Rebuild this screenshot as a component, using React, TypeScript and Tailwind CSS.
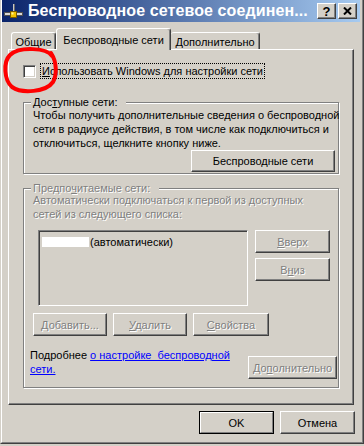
import React from "react";

type BtnProps = {
  className?: string;
  children: React.ReactNode;
  disabled?: boolean;
  isDefault?: boolean;
};

function Btn({ className = "", children, disabled = false, isDefault = false }: BtnProps) {
  const txt = disabled ? "text-[#808080] [text-shadow:1px_1px_0_#ffffff]" : "text-black";
  if (isDefault) {
    return (
      <div className={`border border-black ${className}`}>
        <div
          className={`w-full h-full flex items-center justify-center bg-[#d4d0c8] border border-t-white border-l-white border-r-[#808080] border-b-[#808080] ${txt}`}
        >
          {children}
        </div>
      </div>
    );
  }
  return (
    <div
      className={`flex items-center justify-center bg-[#d4d0c8] border border-t-white border-l-white border-r-[#404040] border-b-[#404040] shadow-[inset_-1px_-1px_0_#808080] ${txt} ${className}`}
    >
      {children}
    </div>
  );
}

function NetIcon() {
  return (
    <svg width="19" height="16" viewBox="0 0 19 16" className="ml-[2px] shrink-0">
      <rect x="9" y="1" width="2" height="10" fill="#6b6b6b" />
      <rect x="9" y="1" width="1" height="10" fill="#c8c8c8" />
      <rect x="0.5" y="9.5" width="18" height="3" fill="#d8d8d8" stroke="#505050" strokeWidth="1" />
      <rect x="6.5" y="8.5" width="6" height="6" fill="#f2c200" stroke="#7a5a00" strokeWidth="1" />
      <rect x="7.5" y="9.5" width="2" height="2" fill="#fff3a0" />
    </svg>
  );
}

function Group({
  label,
  disabled,
  className,
  children,
}: {
  label: React.ReactNode;
  disabled?: boolean;
  className: string;
  children: React.ReactNode;
}) {
  return (
    <div
      className={`relative border border-[#808080] shadow-[inset_1px_1px_0_#ffffff,1px_1px_0_#ffffff] ${className}`}
    >
      <div
        className={`absolute left-[7px] -top-[8px] bg-[#d4d0c8] pl-[2px] pr-[9px] whitespace-nowrap ${
          disabled ? "text-[#808080] [text-shadow:1px_1px_0_#ffffff]" : "text-black"
        }`}
      >
        {label}
      </div>
      {children}
    </div>
  );
}

export default function App() {
  const dis = "text-[#808080] [text-shadow:1px_1px_0_#ffffff]";
  return (
    <div className="relative w-[364px] h-[446px] bg-[#d4d0c8] font-['Liberation_Sans',Arial,sans-serif] text-[11px] leading-[14px] text-black overflow-hidden">
      <div className="h-[444px] border-l border-r border-b border-l-[#d4d0c8] border-r-[#404040] border-b-[#404040]">
        <div className="h-full border-l border-r border-b border-l-white border-r-[#808080] border-b-[#808080] flex flex-col">
          {/* Title bar */}
          <div className="h-[22px] mr-[2px] shrink-0 bg-[linear-gradient(to_right,#0a246a,#a6caf0)] flex items-center">
            <NetIcon />
            <span className="ml-[5px] min-w-0 text-white font-bold text-[16px] leading-[20px] tracking-[0.1px] whitespace-nowrap">
              Беспроводное сетевое соединен...
            </span>
            <div className="ml-auto mr-[3px] flex gap-[2px] shrink-0">
              <div className="w-[19px] h-[16px] flex items-center justify-center bg-[#d4d0c8] border border-t-white border-l-white border-r-[#404040] border-b-[#404040] shadow-[inset_-1px_-1px_0_#808080] font-bold text-[13px] leading-[13px] text-black">
                ?
              </div>
              <div className="w-[19px] h-[16px] flex items-center justify-center bg-[#d4d0c8] border border-t-white border-l-white border-r-[#404040] border-b-[#404040] shadow-[inset_-1px_-1px_0_#808080]">
                <svg width="9" height="8" viewBox="0 0 9 8">
                  <path d="M1 0.5 L8 7.5 M8 0.5 L1 7.5" stroke="#000" strokeWidth="2" />
                </svg>
              </div>
            </div>
          </div>

          {/* Tabs */}
          <div className="mt-[6px] ml-[9px] h-[21px] flex items-end shrink-0">
            <div className="w-[45px] h-[17px] pt-[2px] text-center border-t border-l border-r border-t-white border-l-white border-r-[#404040] rounded-t-[3px] shadow-[inset_-1px_0_0_#808080]">
              Общие
            </div>
            <div className="relative z-10 -mb-px w-[115px] h-[22px] pt-[4px] text-center bg-[#d4d0c8] border-t border-l border-r border-t-white border-l-white border-r-[#404040] rounded-t-[3px] shadow-[inset_-1px_0_0_#808080]">
              Беспроводные сети
            </div>
            <div className="w-[89px] h-[17px] pt-[2px] text-center border-t border-r border-t-white border-r-[#404040] rounded-t-[3px] shadow-[inset_-1px_0_0_#808080]">
              Дополнительно
            </div>
          </div>

          {/* Panel */}
          <div className="ml-[6px] w-[346px] h-[356px] shrink-0 border border-t-white border-l-white border-r-[#404040] border-b-[#404040] shadow-[inset_-1px_-1px_0_#808080] pt-[13px] px-[14px] flex flex-col">
            <div className="h-[16px] flex items-center">
              <div className="w-[13px] h-[13px] bg-white border border-t-[#808080] border-l-[#808080] border-r-white border-b-white shadow-[inset_1px_1px_0_#404040,inset_-1px_-1px_0_#d4d0c8]" />
              <div className="ml-[4px] h-[16px] border border-dotted border-black pl-[1px] pr-[1px] leading-[14px] whitespace-nowrap">
                <u>И</u>спользовать Windows для настройки сети
              </div>
            </div>

            <Group
              className="mt-[23px] h-[72px] pt-[5px] pl-[9px] pr-[3px] flex flex-col"
              label={
                <span>
                  Дос<u>т</u>упные сети:
                </span>
              }
            >
              <div className="whitespace-nowrap">Чтобы получить дополнительные сведения о беспроводной</div>
              <div className="whitespace-nowrap">сети в радиусе действия, в том числе как подключиться и</div>
              <div className="whitespace-nowrap">отключиться, щелкните кнопку ниже.</div>
              <div className="flex justify-end">
                <Btn className="w-[144px] h-[22px]">Беспроводные сети</Btn>
              </div>
            </Group>

            <Group
              disabled
              className="mt-[14px] h-[200px] pt-[4px] pl-[9px] pr-[1px] flex flex-col"
              label={
                <span>
                  Предпо<u>ч</u>итаемые сети:
                </span>
              }
            >
              <div className={`whitespace-nowrap ${dis}`}>Автоматически подключаться к первой из доступных</div>
              <div className={`whitespace-nowrap ${dis}`}>сетей из следующего списка:</div>

              <div className="mt-[9px] flex items-start">
                <div className="ml-[5px] w-[210px] h-[76px] border border-t-[#808080] border-l-[#808080] border-r-white border-b-white shadow-[inset_1px_1px_0_#404040,inset_-1px_-1px_0_#d4d0c8] pt-[4px] pl-[3px]">
                  <div className="flex items-center h-[14px]">
                    <div className="w-[47px] h-[10px] bg-white" />
                    <span className="ml-[1px] whitespace-nowrap">(автоматически)</span>
                  </div>
                </div>
                <div className="ml-[7px] flex flex-col gap-[5px]">
                  <Btn disabled className="w-[75px] h-[23px]">
                    <span>
                      <u>В</u>верх
                    </span>
                  </Btn>
                  <Btn disabled className="w-[75px] h-[23px]">
                    <span>
                      В<u>н</u>из
                    </span>
                  </Btn>
                </div>
              </div>

              <div className="mt-[7px] flex gap-[6px]">
                <Btn disabled className="w-[74px] h-[23px]">
                  <span>
                    <u>Д</u>обавить...
                  </span>
                </Btn>
                <Btn disabled className="w-[74px] h-[23px]">
                  <span>
                    <u>У</u>далить
                  </span>
                </Btn>
                <Btn disabled className="w-[76px] h-[23px]">
                  <span>
                    <u>С</u>войства
                  </span>
                </Btn>
              </div>

              <div className="mt-[12px] -ml-[3px] flex justify-between items-start">
                <div className="whitespace-nowrap">
                  <div>
                    Подробнее{" "}
                    <span className="text-[#0000ff] underline">о настройке&nbsp; беспроводной</span>
                  </div>
                  <div>
                    <span className="text-[#0000ff] underline">сети.</span>
                  </div>
                </div>
                <Btn disabled className="mt-[8px] w-[89px] h-[23px]">
                  <span>
                    До<u>п</u>олнительно
                  </span>
                </Btn>
              </div>
            </Group>
          </div>

          {/* Bottom buttons */}
          <div className="mt-[6px] mr-[7px] flex justify-end gap-[6px]">
            <Btn isDefault className="w-[75px] h-[23px]">
              OK
            </Btn>
            <Btn className="w-[75px] h-[23px]">Отмена</Btn>
          </div>
        </div>
      </div>

      {/* Red hand-drawn highlight circle */}
      <svg className="absolute left-0 top-0 pointer-events-none" width="70" height="100" viewBox="0 0 70 100">
        <path
          d="M52 56 C47 48, 20 46, 10 55 C3 62, 4 80, 12 87 C22 94, 46 92, 53 82 C57 75, 57 62, 51 53"
          fill="none"
          stroke="#ff0000"
          strokeWidth="4"
          strokeLinecap="round"
        />
      </svg>
    </div>
  );
}
